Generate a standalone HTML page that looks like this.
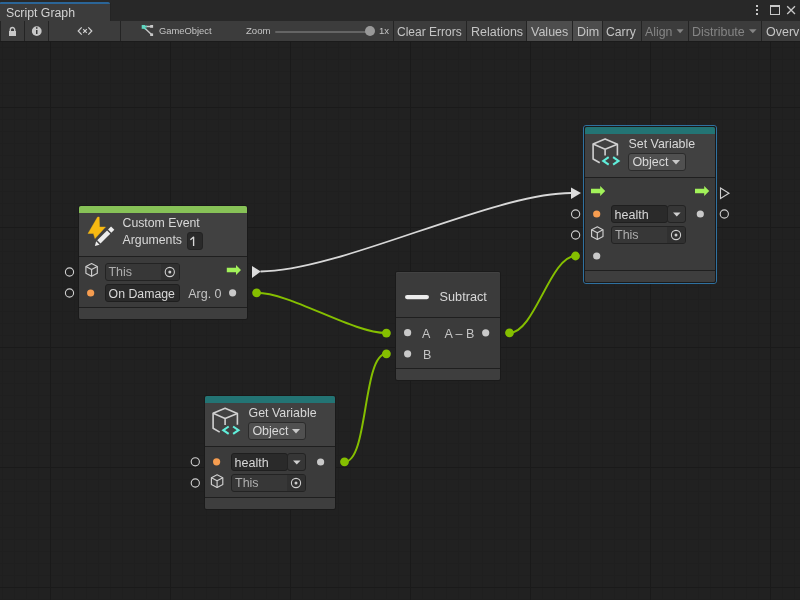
<!DOCTYPE html>
<html><head><meta charset="utf-8">
<style>
html,body{margin:0;padding:0}
body{width:800px;height:600px;overflow:hidden;position:relative;background:#212121;font-family:"Liberation Sans",sans-serif}
#root{position:absolute;left:0;top:0;width:800px;height:600px;overflow:hidden;will-change:transform;background:#212121}
.a{position:absolute;box-sizing:border-box}
.tx{white-space:nowrap;line-height:0}
#graph{left:0;top:41px;width:800px;height:559px;background-color:#212121;
 background-image:
  linear-gradient(90deg,#1a1a1a 1px,transparent 1px),
  linear-gradient(180deg,#1a1a1a 1px,transparent 1px),
  linear-gradient(90deg,#1f1f1f 1px,transparent 1px),
  linear-gradient(180deg,#1f1f1f 1px,transparent 1px);
 background-size:120px 559px,800px 120px,12px 559px,800px 12px;
 background-position:50px 0,0 66px,2px 0,0 6px;}
</style></head><body><div id="root">
<div id="graph" class="a"></div>
<div class="a" style="left:0px;top:0px;width:800px;height:21px;background:#282828;"></div>
<div class="a" style="left:0px;top:2px;width:111px;height:19px;background:#242424;border-radius:0 3px 0 0"></div>
<div class="a" style="left:0px;top:2px;width:110px;height:19px;background:#3c3c3c;border-radius:0 3px 0 0"></div>
<div class="a" style="left:0px;top:2px;width:110px;height:2px;background:#2b6597;border-radius:2px 3px 0 0"></div>
<div class="a tx" style="left:6px;top:12.64px;font-size:12.3px;color:#d2d2d2;">Script Graph</div>
<div class="a" style="left:756px;top:5px;width:2px;height:2px;background:#c8c8c8;"></div>
<div class="a" style="left:756px;top:9px;width:2px;height:2px;background:#c8c8c8;"></div>
<div class="a" style="left:756px;top:13px;width:2px;height:2px;background:#c8c8c8;"></div>
<div class="a" style="left:770px;top:5px;width:10px;height:10px;border:1px solid #c8c8c8;border-top-width:2px"></div>
<div class="a" style="left:0px;top:21px;width:800px;height:20px;background:#3c3c3c;"></div>
<div class="a" style="left:0px;top:41px;width:800px;height:1px;background:#1b1b1b;"></div>
<div class="a" style="left:527px;top:21px;width:45px;height:20px;background:#4d4d4d;"></div>
<div class="a" style="left:573px;top:21px;width:29px;height:20px;background:#4d4d4d;"></div>
<div class="a" style="left:0px;top:21px;width:1px;height:20px;background:#242424;"></div>
<div class="a" style="left:24px;top:21px;width:1px;height:20px;background:#242424;"></div>
<div class="a" style="left:48px;top:21px;width:1px;height:20px;background:#242424;"></div>
<div class="a" style="left:120px;top:21px;width:1px;height:20px;background:#242424;"></div>
<div class="a" style="left:393px;top:21px;width:1px;height:20px;background:#242424;"></div>
<div class="a" style="left:466px;top:21px;width:1px;height:20px;background:#242424;"></div>
<div class="a" style="left:526px;top:21px;width:1px;height:20px;background:#242424;"></div>
<div class="a" style="left:572px;top:21px;width:1px;height:20px;background:#242424;"></div>
<div class="a" style="left:602px;top:21px;width:1px;height:20px;background:#242424;"></div>
<div class="a" style="left:641px;top:21px;width:1px;height:20px;background:#242424;"></div>
<div class="a" style="left:688px;top:21px;width:1px;height:20px;background:#242424;"></div>
<div class="a" style="left:761px;top:21px;width:1px;height:20px;background:#242424;"></div>
<div class="a tx" style="left:159px;top:31.24px;font-size:9.4px;color:#c4c4c4;">GameObject</div>
<div class="a tx" style="left:246px;top:30.97px;font-size:9.6px;color:#c4c4c4;">Zoom</div>
<div class="a" style="left:275px;top:31px;width:95px;height:2px;background:#656565;border-radius:1px"></div>
<div class="a" style="left:365px;top:26px;width:10px;height:10px;background:#999999;border-radius:50%"></div>
<div class="a tx" style="left:379px;top:30.97px;font-size:9.6px;color:#c4c4c4;">1x</div>
<div class="a tx" style="left:397px;top:31.84px;font-size:12px;color:#c4c4c4;">Clear Errors</div>
<div class="a tx" style="left:471px;top:31.67px;font-size:12.5px;color:#c4c4c4;">Relations</div>
<div class="a tx" style="left:531px;top:31.67px;font-size:12.5px;color:#c4c4c4;">Values</div>
<div class="a tx" style="left:577px;top:31.67px;font-size:12.5px;color:#c4c4c4;">Dim</div>
<div class="a tx" style="left:606px;top:31.77px;font-size:12.2px;color:#c4c4c4;">Carry</div>
<div class="a tx" style="left:645px;top:31.74px;font-size:12.3px;color:#858585;">Align</div>
<div class="a tx" style="left:692px;top:31.67px;font-size:12.5px;color:#858585;">Distribute</div>
<div class="a tx" style="left:766px;top:31.67px;font-size:12.5px;color:#c4c4c4;">Overview</div>
<div class="a" style="left:78px;top:205px;width:170px;height:115px;background:#1a1a1a;border-radius:3px"></div>
<div class="a" style="left:79px;top:206px;width:168px;height:113px;background:#3b3b3b;border-radius:2px"></div>
<div class="a" style="left:79px;top:206px;width:168px;height:7px;background:#87c257;border-radius:2px 2px 0 0"></div>
<div class="a" style="left:79px;top:213px;width:168px;height:43px;background:#414141;"></div>
<div class="a" style="left:79px;top:256px;width:168px;height:1px;background:#1f1f1f;"></div>
<div class="a" style="left:79px;top:257px;width:168px;height:50px;background:#3b3b3b;"></div>
<div class="a" style="left:79px;top:307px;width:168px;height:1px;background:#1f1f1f;"></div>
<div class="a" style="left:79px;top:308px;width:168px;height:11px;background:#3e3e3e;border-radius:0 0 2px 2px"></div>
<div class="a tx" style="left:122.5px;top:222.74px;font-size:12.3px;color:#d8d8d8;">Custom Event</div>
<div class="a tx" style="left:122.5px;top:240.24px;font-size:12.3px;color:#d8d8d8;">Arguments</div>
<div class="a" style="left:187px;top:232px;width:16px;height:18px;background:#2a2a2a;border:1px solid #232323;border-radius:3px"></div>
<div class="a" style="left:105px;top:263px;width:75px;height:18px;background:#373737;border:1px solid #232323;border-radius:3px"></div>
<div class="a" style="left:161px;top:264px;width:18px;height:16px;background:#303030;border-radius:0 2px 2px 0"></div>
<div class="a tx" style="left:108.4px;top:271.67px;font-size:12.5px;color:#aeaeae;">This</div>
<div class="a" style="left:105px;top:284px;width:75px;height:18px;background:#2a2a2a;border:1px solid #1f1f1f;border-radius:3px"></div>
<div class="a tx" style="left:108.6px;top:293.74px;font-size:12.3px;color:#d8d8d8;">On Damage</div>
<div class="a tx" style="left:188.2px;top:293.67px;font-size:12.5px;color:#c4c4c4;">Arg. 0</div>
<div class="a" style="left:395px;top:271px;width:106px;height:110px;background:#1a1a1a;border-radius:3px"></div>
<div class="a" style="left:396px;top:272px;width:104px;height:108px;background:#3b3b3b;border-radius:2px"></div>
<div class="a" style="left:396px;top:272px;width:104px;height:45px;background:#3b3b3b;border-radius:2px 2px 0 0;box-shadow:inset 0 1px 0 #424242"></div>
<div class="a" style="left:396px;top:317px;width:104px;height:1px;background:#1f1f1f;"></div>
<div class="a" style="left:396px;top:318px;width:104px;height:50px;background:#3b3b3b;"></div>
<div class="a" style="left:396px;top:368px;width:104px;height:1px;background:#1f1f1f;"></div>
<div class="a" style="left:396px;top:369px;width:104px;height:11px;background:#3e3e3e;border-radius:0 0 2px 2px"></div>
<div class="a tx" style="left:439.6px;top:296.60px;font-size:12.7px;color:#d8d8d8;">Subtract</div>
<div class="a tx" style="left:421.9px;top:333.67px;font-size:12.5px;color:#c4c4c4;">A</div>
<div class="a tx" style="left:422.9px;top:354.67px;font-size:12.5px;color:#c4c4c4;">B</div>
<div class="a tx" style="left:444.4px;top:333.67px;font-size:12.5px;color:#c4c4c4;">A &#8211; B</div>
<div class="a" style="left:583px;top:125px;width:134px;height:159px;background:transparent;border:1px solid #2f71a0;border-radius:3px"></div>
<div class="a" style="left:584px;top:126px;width:132px;height:157px;background:#1a1a1a;border-radius:3px"></div>
<div class="a" style="left:585px;top:127px;width:130px;height:155px;background:#3b3b3b;border-radius:2px"></div>
<div class="a" style="left:585px;top:127px;width:130px;height:7px;background:#237474;border-radius:2px 2px 0 0"></div>
<div class="a" style="left:585px;top:134px;width:130px;height:43px;background:#414141;"></div>
<div class="a" style="left:585px;top:177px;width:130px;height:1px;background:#1f1f1f;"></div>
<div class="a" style="left:585px;top:178px;width:130px;height:92px;background:#3b3b3b;"></div>
<div class="a" style="left:585px;top:270px;width:130px;height:1px;background:#1f1f1f;"></div>
<div class="a" style="left:585px;top:271px;width:130px;height:11px;background:#3e3e3e;border-radius:0 0 2px 2px"></div>
<div class="a tx" style="left:628.5px;top:144.20px;font-size:12.4px;color:#d8d8d8;">Set Variable</div>
<div class="a" style="left:628px;top:153px;width:58px;height:18px;background:#505050;border:1px solid #2b2b2b;border-radius:3px"></div>
<div class="a tx" style="left:632.4px;top:161.67px;font-size:12.5px;color:#d8d8d8;">Object</div>
<div class="a" style="left:611px;top:205px;width:57px;height:18px;background:#2a2a2a;border:1px solid #1f1f1f;border-radius:3px"></div>
<div class="a" style="left:667px;top:205px;width:19px;height:18px;background:#363636;border:1px solid #232323;border-radius:3px"></div>
<div class="a tx" style="left:614.6px;top:214.77px;font-size:12.5px;color:#d8d8d8;">health</div>
<div class="a" style="left:611px;top:226px;width:75px;height:18px;background:#373737;border:1px solid #232323;border-radius:3px"></div>
<div class="a" style="left:667px;top:227px;width:18px;height:16px;background:#303030;border-radius:0 2px 2px 0"></div>
<div class="a tx" style="left:615px;top:234.67px;font-size:12.5px;color:#aeaeae;">This</div>
<div class="a" style="left:204px;top:395px;width:132px;height:115px;background:#1a1a1a;border-radius:3px"></div>
<div class="a" style="left:205px;top:396px;width:130px;height:113px;background:#3b3b3b;border-radius:2px"></div>
<div class="a" style="left:205px;top:396px;width:130px;height:7px;background:#237474;border-radius:2px 2px 0 0"></div>
<div class="a" style="left:205px;top:403px;width:130px;height:43px;background:#414141;"></div>
<div class="a" style="left:205px;top:446px;width:130px;height:1px;background:#1f1f1f;"></div>
<div class="a" style="left:205px;top:447px;width:130px;height:50px;background:#3b3b3b;"></div>
<div class="a" style="left:205px;top:497px;width:130px;height:1px;background:#1f1f1f;"></div>
<div class="a" style="left:205px;top:498px;width:130px;height:11px;background:#3e3e3e;border-radius:0 0 2px 2px"></div>
<div class="a tx" style="left:248.6px;top:413.20px;font-size:12.4px;color:#d8d8d8;">Get Variable</div>
<div class="a" style="left:248px;top:422px;width:58px;height:18px;background:#505050;border:1px solid #2b2b2b;border-radius:3px"></div>
<div class="a tx" style="left:252.4px;top:430.67px;font-size:12.5px;color:#d8d8d8;">Object</div>
<div class="a" style="left:231px;top:453px;width:57px;height:18px;background:#2a2a2a;border:1px solid #1f1f1f;border-radius:3px"></div>
<div class="a" style="left:287px;top:453px;width:19px;height:18px;background:#363636;border:1px solid #232323;border-radius:3px"></div>
<div class="a tx" style="left:234.6px;top:462.67px;font-size:12.5px;color:#d8d8d8;">health</div>
<div class="a" style="left:231px;top:474px;width:75px;height:18px;background:#373737;border:1px solid #232323;border-radius:3px"></div>
<div class="a" style="left:287px;top:475px;width:18px;height:16px;background:#303030;border-radius:0 2px 2px 0"></div>
<div class="a tx" style="left:235px;top:482.67px;font-size:12.5px;color:#aeaeae;">This</div>
<svg class="a" style="left:0;top:0" width="800" height="600" viewBox="0 0 800 600"><path d="M787.2 6.2L795 14M795 6.2L787.2 14" stroke="#c8c8c8" stroke-width="1.3" fill="none"/>
<path d="M10.3 31V29.7a2.2 2.2 0 0 1 4.4 0V31" fill="none" stroke="#c8c8c8" stroke-width="1.4"/>
<rect x="9" y="31" width="7" height="5" fill="#c8c8c8"/>
<circle cx="36.75" cy="31.1" r="4.9" fill="#c8c8c8"/><rect x="36" y="27.2" width="1.5" height="1.6" fill="#3c3c3c"/><rect x="36" y="30" width="1.5" height="4" fill="#3c3c3c"/>
<path d="M81.7 27.3L78.2 31L81.7 34.7M88.3 27.3L91.8 31L88.3 34.7M83.2 29.2L86.8 32.8M86.8 29.2L83.2 32.8" fill="none" stroke="#d0d0d0" stroke-width="1.2"/>
<path d="M143 26.5L151 26.5M143 26.5L151.5 34.5" fill="none" stroke="#c8c8c8" stroke-width="1.4"/>
<path d="M143 26.5L147 26.5M143 26.5L146 29.5" fill="none" stroke="#5fd6c0" stroke-width="1.6"/>
<rect x="141.7" y="25" width="3.3" height="3.8" fill="#5fd6c0"/><rect x="150.2" y="25" width="2.9" height="2.8" fill="#c8c8c8"/><rect x="150.2" y="33.4" width="2.9" height="2.6" fill="#c8c8c8"/>
<path d="M676.6 29.3h7l-3.5 4z" fill="#858585"/>
<path d="M749 29.3h7.6l-3.8 4z" fill="#858585"/>
<path d="M190.4 239.8L193.6 237.1V246" fill="none" stroke="#d8d8d8" stroke-width="1.35" stroke-linejoin="round"/>
<circle cx="69.5" cy="272" r="4.1" fill="none" stroke="#cfcfcf" stroke-width="1.1"/>
<circle cx="69.5" cy="293" r="4.1" fill="none" stroke="#cfcfcf" stroke-width="1.1"/>
<g transform="translate(85.5,263.2)" fill="none" stroke="#cfcfcf" stroke-width="1.15" stroke-linejoin="round"><path d="M6.1 0.3L0.4 3.2V10.1L6.1 13L11.8 10.1V3.2Z"/><path d="M0.4 3.2L6.1 6.3L11.8 3.2M6.1 6.3V13"/></g>
<circle cx="169.8" cy="272" r="4.6" fill="none" stroke="#cfcfcf" stroke-width="1.1"/><circle cx="169.8" cy="272" r="1.5" fill="#cfcfcf"/>
<circle cx="90.65" cy="293" r="3.6" fill="#f69d50"/>
<circle cx="232.6" cy="292.8" r="3.6" fill="#c9c9c9"/>
<path d="M226.8 267.8H236.0V265L241.0 270L236.0 275V272.2H226.8Z" fill="#a2f25a"/>
<rect x="405" y="295" width="24" height="4.2" rx="2.1" fill="#ececec"/>
<circle cx="407.6" cy="332.7" r="3.6" fill="#c9c9c9"/>
<circle cx="407.6" cy="353.8" r="3.6" fill="#c9c9c9"/>
<circle cx="485.7" cy="332.8" r="3.6" fill="#c9c9c9"/>
<g transform="translate(592,138)" fill="none" stroke="#d0d0d0" stroke-width="1.6" stroke-linejoin="round" stroke-linecap="butt"><path d="M7.7 24.8L1.1 21V5.9L13.1 0.9L25.4 6.2V17.5"/><path d="M1.1 5.9L13.1 11.3L25.4 6.2M13.1 11.3V17.6"/></g><g transform="translate(592,138)" fill="none" stroke="#60eedb" stroke-width="2.1" stroke-linejoin="miter"><path d="M16.7 19.2L11.3 22.9L16.7 26.6M21.1 19.2L26.5 22.9L21.1 26.6"/></g>
<path d="M672 160h8l-4 4.4z" fill="#c8c8c8"/>
<path d="M591 188.8H600.2V186L605.2 191L600.2 196V193.2H591Z" fill="#a2f25a"/>
<path d="M695 188.8H704.2V186L709.2 191L704.2 196V193.2H695Z" fill="#a2f25a"/>
<circle cx="575.6" cy="214" r="4.1" fill="none" stroke="#cfcfcf" stroke-width="1.1"/>
<circle cx="575.6" cy="235" r="4.1" fill="none" stroke="#cfcfcf" stroke-width="1.1"/>
<circle cx="596.7" cy="214" r="3.6" fill="#f69d50"/>
<path d="M673 212.4h7.6l-3.8 4.2z" fill="#d0d0d0"/>
<g transform="translate(591.2,226.5)" fill="none" stroke="#cfcfcf" stroke-width="1.15" stroke-linejoin="round"><path d="M6.1 0.3L0.4 3.2V10.1L6.1 13L11.8 10.1V3.2Z"/><path d="M0.4 3.2L6.1 6.3L11.8 3.2M6.1 6.3V13"/></g>
<circle cx="676" cy="235" r="4.6" fill="none" stroke="#cfcfcf" stroke-width="1.1"/><circle cx="676" cy="235" r="1.5" fill="#cfcfcf"/>
<circle cx="596.7" cy="256" r="3.6" fill="#c9c9c9"/>
<circle cx="700.3" cy="214" r="3.6" fill="#c9c9c9"/>
<path d="M720.5 188L729 193.2L720.5 198.5Z" fill="none" stroke="#cfcfcf" stroke-width="1.1" stroke-linejoin="miter"/>
<circle cx="724.3" cy="214" r="4.1" fill="none" stroke="#cfcfcf" stroke-width="1.1"/>
<g transform="translate(212,407.3)" fill="none" stroke="#d0d0d0" stroke-width="1.6" stroke-linejoin="round" stroke-linecap="butt"><path d="M7.7 24.8L1.1 21V5.9L13.1 0.9L25.4 6.2V17.5"/><path d="M1.1 5.9L13.1 11.3L25.4 6.2M13.1 11.3V17.6"/></g><g transform="translate(212,407.3)" fill="none" stroke="#60eedb" stroke-width="2.1" stroke-linejoin="miter"><path d="M16.7 19.2L11.3 22.9L16.7 26.6M21.1 19.2L26.5 22.9L21.1 26.6"/></g>
<path d="M292 429h8l-4 4.4z" fill="#c8c8c8"/>
<circle cx="195.3" cy="461.8" r="4.1" fill="none" stroke="#cfcfcf" stroke-width="1.1"/>
<circle cx="195.3" cy="483" r="4.1" fill="none" stroke="#cfcfcf" stroke-width="1.1"/>
<circle cx="216.6" cy="461.8" r="3.6" fill="#f69d50"/>
<path d="M293 460.4h7.6l-3.8 4.2z" fill="#d0d0d0"/>
<g transform="translate(211,474.5)" fill="none" stroke="#cfcfcf" stroke-width="1.15" stroke-linejoin="round"><path d="M6.1 0.3L0.4 3.2V10.1L6.1 13L11.8 10.1V3.2Z"/><path d="M0.4 3.2L6.1 6.3L11.8 3.2M6.1 6.3V13"/></g>
<circle cx="296" cy="483" r="4.6" fill="none" stroke="#cfcfcf" stroke-width="1.1"/><circle cx="296" cy="483" r="1.5" fill="#cfcfcf"/>
<circle cx="320.6" cy="462" r="3.6" fill="#c9c9c9"/>
<path d="M97.6 217L99.2 217L99.6 227H105.5L95 238.6L93.4 233.5H88Z" fill="#f7b911" stroke="#f7b911" stroke-width="0.4" stroke-linejoin="round"/>
<g transform="translate(103.8 237) rotate(-45)" fill="#ececec"><path d="M-12.6 0L-8.4 -2.4V2.4Z"/><rect x="-7" y="-2.3" width="13.9" height="4.6"/><rect x="8.3" y="-2.3" width="4.3" height="4.6"/></g>
<path d="M260.5 271.5C338.5 271.5 493 193 571 193" fill="none" stroke="#d8d8d8" stroke-width="1.8"/>
<path d="M252 266L260.8 271.5L252 278Z" fill="#dcdcdc"/>
<path d="M571 187.5L581 193L571 199Z" fill="#dcdcdc"/>
<path d="M256.6 292.8C290.57805357874406 292.8 352.42194642125594 333.1 386.4 333.1" fill="none" stroke="#85bf00" stroke-width="2"/>
<path d="M344.5 461.8C368.5 461.8 362.4 353.8 386.4 353.8" fill="none" stroke="#85bf00" stroke-width="2"/>
<path d="M509.5 332.8C534.8158053397477 332.8 550.1841946602523 256 575.5 256" fill="none" stroke="#85bf00" stroke-width="2"/>
<circle cx="256.6" cy="292.8" r="4.4" fill="#85bf00"/>
<circle cx="386.4" cy="333.1" r="4.4" fill="#85bf00"/>
<circle cx="386.4" cy="353.8" r="4.4" fill="#85bf00"/>
<circle cx="344.5" cy="461.8" r="4.4" fill="#85bf00"/>
<circle cx="509.5" cy="332.8" r="4.4" fill="#85bf00"/>
<circle cx="575.5" cy="256" r="4.4" fill="#85bf00"/></svg>
</div></body></html>
